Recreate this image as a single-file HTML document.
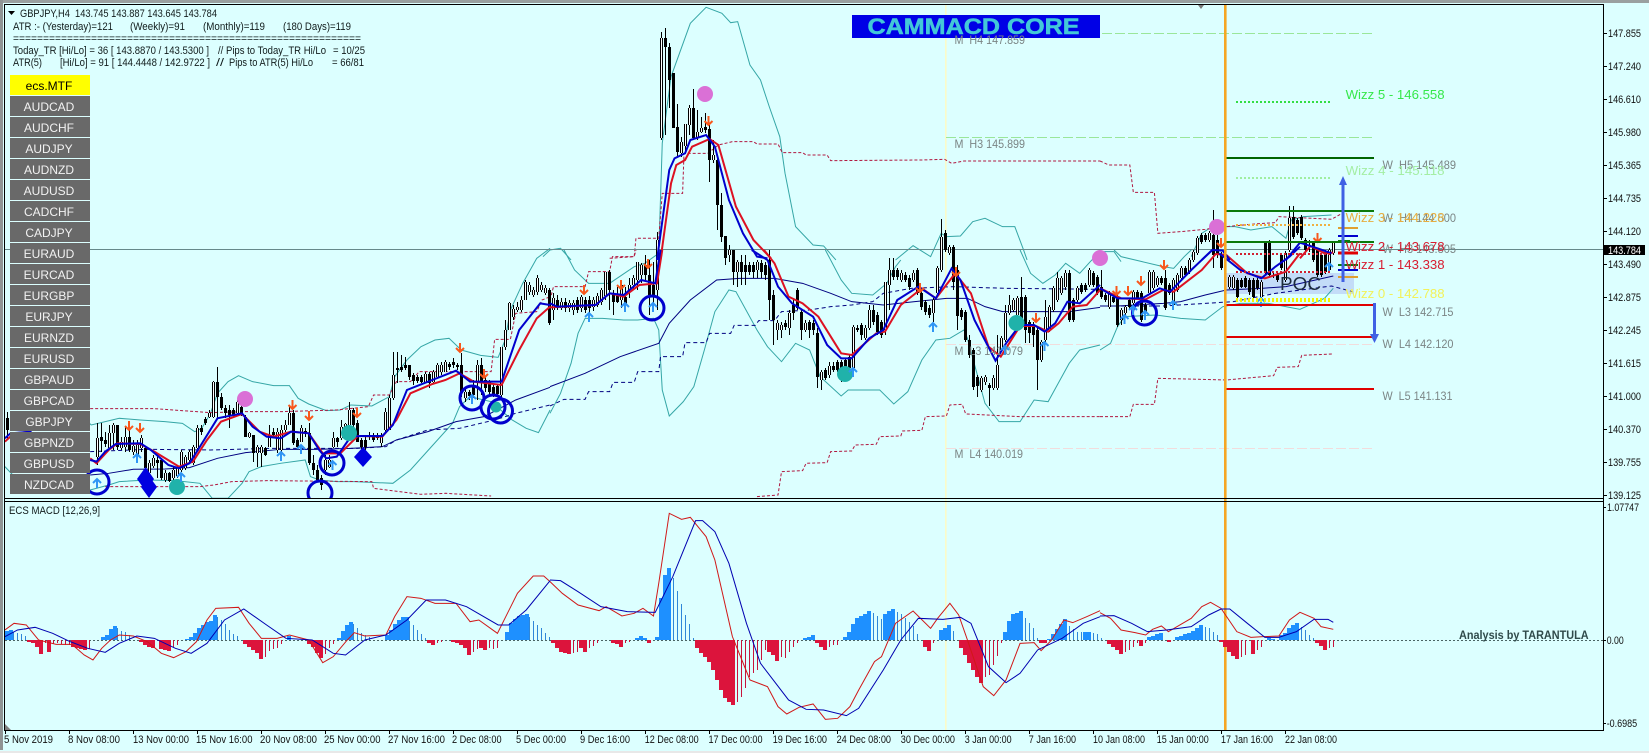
<!DOCTYPE html>
<html><head><meta charset="utf-8"><title>GBPJPY H4</title>
<style>
html,body{margin:0;padding:0;background:#dcffff;width:1649px;height:753px;overflow:hidden}
svg{display:block;position:absolute;left:0;top:0}
text{font-family:"Liberation Sans",sans-serif;white-space:pre}
.t{font-size:11px;fill:#111c1c}
.a{font-size:11px;fill:#111}
.g{font-size:12px;fill:#7b8585}
.w{font-size:13px}
.b{font-size:12px;fill:#f2f2f2;text-anchor:middle}
.v polyline{vector-effect:non-scaling-stroke;fill:none}
.bb polyline{stroke:#35a6a6;stroke-width:1}
.fa polyline{stroke:#0000cd;stroke-width:2}
.sl polyline{stroke:#dd1122;stroke-width:2}
.ma polyline{stroke:#000080;stroke-width:1}
.dn polyline{stroke:#000080;stroke-width:1;stroke-dasharray:4 3}
.dr polyline{stroke:#b01840;stroke-width:1;stroke-dasharray:3 2}
.mr polyline{stroke:#d01818;stroke-width:1}
.mn polyline{stroke:#0000b0;stroke-width:1}
</style></head><body>
<svg width="1649" height="753" viewBox="0 0 1649 753" xmlns="http://www.w3.org/2000/svg">
<defs>
<clipPath id="cm"><rect x="5" y="5" width="1598" height="493"/></clipPath>
<clipPath id="cd"><rect x="5" y="502" width="1598" height="228"/></clipPath>
<path id="u" d="M97 438V457M109 433V448M113 425V433M121 442V448M125 437V447M133 446V452M137 445V455M141 438V448M149 463V473M153 458V466M165 473V480M173 470V478M177 467V476M181 452V470M185 457V468M189 452V460M193 447V463M197 428V448M209 413V417M213 382V417M237 402V413M249 433V437M257 447V453M261 447V453M269 435V447M277 432V450M281 430V450M285 425V430M289 413V425M301 428V442M325 460V470M329 460V467M333 438V447M341 427V438M345 424V430M349 410V425M381 437V443M385 412V430M389 398V430M393 375V398M425 374V382M433 372V382M437 365V377M441 365V372M445 362V372M465 392V398M477 365V383M501 347V395M505 330V347M509 303V330M513 309V317M517 307V310M521 300V310M525 282V300M529 285V292M533 290V295M537 278V292M541 285V290M545 288V293M553 298V310M561 302V308M569 303V308M573 303V310M581 297V308M593 300V307M597 296V305M601 290V302M605 272V296M621 285V300M629 285V290M633 278V285M637 262V280M641 265V275M657 240V290M661 38V138M681 142V153M685 124V146M689 108V125M697 132V138M701 128V132M713 155V160M729 250V255M737 262V272M757 262V270M777 323V330M781 325V330M789 313V328M805 323V330M821 372V380M829 366V375M853 327V368M865 328V338M869 310V328M885 282V330M889 270V285M901 273V280M913 273V280M933 300V313M937 268V293M941 237V270M949 247V253M981 378V390M985 377V382M993 378V388M997 365V388M1001 338V350M1005 313V340M1009 305V313M1013 300V310M1017 298V315M1041 342V360M1045 317V340M1049 307V330M1053 288V310M1057 278V300M1061 278V293M1065 273V287M1077 288V300M1089 270V285M1109 293V307M1121 310V320M1125 307V313M1133 292V303M1149 272V293M1153 272V288M1157 278V285M1173 280V305M1177 275V290M1181 268V278M1189 260V272M1193 252V260M1197 238V253M1209 233V240M1229 277V287M1233 277V288M1261 282V297M1285 253V280M1289 218V250M1329 250V270M1333 243V253"/>
</defs>
<rect width="1649" height="753" fill="#dcffff"/>
<rect x="0" y="0" width="1649" height="3" fill="#9aa0a0"/>
<rect x="0" y="0" width="3" height="750" fill="#8f9494"/>
<rect x="0" y="751" width="1649" height="2" fill="#e8e8e8"/>

<!-- verticals -->
<rect x="945" y="5" width="1.6" height="725" fill="#fbfbc8"/>

<!-- POC -->
<rect x="1225" y="273" width="129" height="21" fill="#c3dcf8"/>

<!-- Monthly levels -->
<g fill="none" stroke-width="1">
<path d="M946 33.5H1372M946 137.5H1372" stroke="#9ae69a" stroke-dasharray="10 3"/>
<path d="M946 344.5H1372M946 448.5H1372" stroke="#f2dcdc" stroke-dasharray="10 3"/>
</g>

<!-- bands & averages -->
<g clip-path="url(#cm)"><g class="v">
<g class="bb">
<polyline transform="translate(0,250) scale(.3508,.3333)" points="14,650 50,690 257,720 310,705 340,695 420,690 500,692 570,700 605,745 650,745 690,700 710,665 745,650 800,640 870,630 885,680 910,690 960,695 1010,695 1120,700 1170,660 1230,590 1290,520 1310,470 1340,440 1400,455 1460,510 1500,535 1535,548 1568,480"/>
<polyline transform="translate(0,250) scale(.3508,.3333)" points="220,483 260,525 300,515 340,505 400,510 470,515 520,520 555,545 575,535 600,490 620,430 650,395 680,377 720,395 780,407 825,407 850,445 880,462 930,482 970,480 1000,465 1060,468 1110,440 1125,380 1160,330 1200,290 1240,270 1280,265 1315,300 1370,316 1420,322 1440,270 1455,180 1490,100 1530,25 1568,-5"/>
<polyline transform="translate(550,0) scale(.3508,.3333)" points="-20,770 0,750 30,745 60,780"/>
<polyline transform="translate(550,250) scale(.3508,.3333)" points="40,0 70,60 110,100 170,100 240,50 270,40 310,10"/>
<polyline transform="translate(550,0) scale(.3508,.3333)" points="310,760 320,430 345,230 400,70 445,22 490,40 515,68 535,65 570,195 600,240 625,320 655,410 670,520 700,680 750,735 780,738 815,780"/>
<polyline transform="translate(550,250) scale(.3508,.3333)" points="785,0 830,90 860,130 920,135 960,100 985,50 1000,30"/>
<polyline transform="translate(550,0) scale(.3508,.3333)" points="985,780 1035,737 1085,770 1115,700 1130,710 1170,708 1205,665 1240,655 1290,680 1325,680 1350,750 1360,780"/>
<polyline transform="translate(550,250) scale(.3508,.3333)" points="1340,0 1370,70 1405,100 1440,75 1470,40 1510,70 1540,35 1568,5"/>
<polyline transform="translate(1100,0) scale(.3508,.3333)" points="-20,765 0,755 40,755 60,785"/>
<polyline transform="translate(1100,250) scale(.3508,.3333)" points="40,0 60,20 120,35 180,50 210,55 240,20 260,0"/>
<polyline transform="translate(1100,0) scale(.3508,.3333)" points="260,770 290,700 320,680 385,680 430,690 490,680 530,715 545,660 580,650 660,645"/>
<polyline transform="translate(550,250) scale(.3508,.3333)" points="0,490 30,430 60,340 80,250 100,205 150,205 210,210 250,210 295,205 310,240 320,420 340,498 380,455 410,410 440,300 470,185 510,120 530,125 590,240 620,290 660,335 700,280 740,300 770,380 830,438 850,420 940,420 980,462 1020,425 1060,330 1100,270 1140,265 1180,240 1190,265 1240,460 1280,515 1340,515 1380,450 1420,455 1480,340 1510,300 1568,285"/>
<polyline transform="translate(1100,250) scale(.3508,.3333)" points="0,300 30,280 50,230 70,200 160,195 230,205 300,210 350,170 400,160 480,160 570,178 640,145 665,115"/>
</g>
<g class="ma">
<polyline transform="translate(0,250) scale(.3508,.3333)" points="257,675 310,670 380,658 470,657 540,653 620,625 700,608 800,598 900,598 1000,595 1090,590 1130,570 1220,545 1300,515 1380,500 1470,450 1568,412"/>
<polyline transform="translate(550,250) scale(.3508,.3333)" points="0,410 100,370 200,320 310,280 340,220 400,150 475,90 540,85 640,85 720,100 800,130 860,155 950,165 1040,155 1130,145 1190,145 1240,170 1290,185 1380,185 1480,185 1568,172"/>
<polyline transform="translate(1100,250) scale(.3508,.3333)" points="0,168 50,168 180,160 230,155 300,135 360,120 460,115 530,110 665,78"/>
</g>
<g class="dn">
<polyline transform="translate(0,250) scale(.3508,.3333)" points="257,605 420,598 600,600 780,595 1020,595 1100,590 1130,570 1220,540 1310,535 1410,510 1470,490 1568,465"/>
<polyline transform="translate(550,250) scale(.3508,.3333)" points="0,468 40,448 100,448 110,425 170,425 180,397 240,397 250,365 310,365 315,320 378,320 385,278 445,278 455,250 515,250 525,226 585,226 595,212 640,212 660,185 740,180 800,170 860,165 920,155 950,130 1030,115 1150,110 1300,115 1568,118"/>
<polyline transform="translate(1100,250) scale(.3508,.3333)" points="0,168 180,168 380,155 500,130 660,108 720,125"/>
</g>
<g class="dr">
<polyline transform="translate(0,250) scale(.3508,.3333)" points="257,476 440,476 600,488 700,485 800,485 960,480 1050,470 1065,435 1110,435 1130,395 1170,395 1195,365 1400,365 1410,268 1455,268 1470,190 1530,185 1545,150 1568,140"/>
<polyline transform="translate(550,250) scale(.3508,.3333)" points="0,150 10,110 100,110 110,65 170,65 178,20 240,20 245,0"/>
<polyline transform="translate(550,0) scale(.3508,.3333)" points="170,775 240,770 245,715 310,715 320,580 378,580 382,460 450,460 480,435 520,425 580,425 590,432 650,432 662,458 720,458 730,465 790,465 800,482 1060,480 1125,478 1145,490 1180,483 1568,483"/>
<polyline transform="translate(1100,0) scale(.3508,.3333)" points="0,483 25,495 85,495 95,577 155,577 165,700 230,695 300,688 360,680 440,672 500,668 510,650 660,658 690,640"/>
<polyline transform="translate(0,250) scale(.3508,.3333)" points="300,710 570,710 610,705 660,695 760,692 1060,695 1065,715 1200,733 1270,730 1400,738"/>
<polyline transform="translate(550,250) scale(.3508,.3333)" points="590,740 650,735 660,665 720,662 730,640 790,638 800,605 860,603 870,585 930,583 940,560 1000,558 1005,543 1060,541 1070,500 1130,498 1140,465 1175,463 1185,492 1340,500 1568,500"/>
<polyline transform="translate(1100,250) scale(.3508,.3333)" points="0,500 85,500 95,463 155,463 165,385 360,390 495,377 505,352 565,350 575,316 665,312"/>
</g>
</g>

<!-- price line -->
<rect x="5" y="249" width="1598" height="1" fill="#66888a"/>

<g transform="translate(.5 0)">
<!-- candles wicks -->
<path fill="none" stroke="#000" stroke-width="1" d="M7 412V440M97 423V465M101 423V452M105 432V447M109 425V450M113 423V450M117 425V450M121 437V450M125 427V452M129 427V452M133 440V455M137 440V458M141 435V452M145 447V470M149 460V477M153 455V468M157 455V478M161 458V480M165 470V482M169 472V482M173 467V480M177 466V478M181 450V472M185 455V470M189 450V462M193 445V465M197 425V450M201 425V435M205 417V425M209 410V418M213 381V418M217 367V418M221 393V410M225 405V418M229 405V428M233 408V418M237 400V416M241 405V416M245 415V437M249 432V438M253 435V462M257 445V467M261 445V467M265 447V456M269 425V447M273 428V437M277 428V453M281 425V460M285 420V432M289 407V425M293 410V445M297 438V450M301 425V442M305 428V437M309 423V465M313 455V475M317 465V482M321 475V490M325 455V475M329 455V468M333 432V448M337 437V447M341 420V440M345 423V432M349 402V428M353 408V428M357 420V442M361 438V450M365 435V450M369 432V440M373 433V442M377 433V440M381 433V447M385 408V432M389 395V430M393 352V400M397 352V383M401 355V372M405 357V370M409 365V380M413 373V385M417 375V383M421 375V383M425 372V383M429 372V388M433 370V383M437 363V378M441 362V375M445 360V372M449 362V370M453 358V368M457 363V370M461 353V397M465 388V402M469 390V400M473 380V398M477 360V400M481 358V395M485 377V392M489 380V395M493 385V397M497 384V397M501 347V400M505 320V350M509 302V330M513 305V320M517 302V312M521 296V312M525 280V300M529 282V295M533 287V297M537 275V295M541 282V292M545 285V295M549 288V325M553 293V320M557 295V310M561 298V310M565 298V312M569 300V312M573 300V315M577 297V313M581 295V312M585 297V313M589 296V314M593 297V311M597 293V307M601 288V305M605 272V300M609 270V310M613 290V315M617 287V303M621 282V308M625 287V305M629 278V298M633 275V290M637 262V290M641 263V283M645 255V280M649 260V315M653 262V310M657 232V310M661 32V140M665 28V135M669 43V108M673 73V128M677 104V157M681 137V157M685 124V153M689 105V135M693 89V140M697 110V140M701 117V133M705 113V133M709 125V182M713 140V163M717 155V230M721 193V242M725 236V265M729 245V262M733 250V285M737 260V287M741 255V285M745 255V285M749 262V275M753 262V278M757 260V278M761 260V278M765 262V280M769 250V320M773 290V345M777 320V340M781 322V338M785 320V330M789 310V335M793 298V320M797 288V310M801 310V340M805 320V332M809 320V338M813 320V335M817 328V388M821 370V390M825 368V380M829 362V378M833 362V372M837 360V372M841 360V382M845 358V372M849 355V370M853 325V370M857 325V332M861 323V340M865 325V340M869 305V330M873 305V325M877 312V335M881 320V338M885 282V335M889 258V310M893 258V280M897 268V280M901 270V282M905 272V282M909 275V290M913 270V282M917 268V295M921 290V310M925 300V315M929 305V318M933 298V322M937 266V295M941 219V272M945 230V252M949 245V255M953 245V290M957 265V330M961 308V320M965 310V342M969 335V358M973 348V390M977 375V397M981 376V392M985 375V385M989 383V406M993 375V390M997 335V390M1001 336V352M1005 305V342M1009 295V315M1013 298V312M1017 296V318M1021 277V328M1025 295V343M1029 320V343M1033 322V347M1037 328V390M1041 340V362M1045 300V342M1049 305V332M1053 286V312M1057 272V302M1061 276V295M1065 270V290M1069 270V322M1073 298V322M1077 286V302M1081 283V294M1085 283V292M1089 268V287M1093 271V287M1097 275V295M1101 270V299M1105 293V302M1109 291V309M1113 295V303M1117 295V327M1121 308V325M1125 305V315M1129 298V309M1133 290V305M1137 290V300M1141 291V322M1145 303V315M1149 270V295M1153 270V290M1157 276V287M1161 276V285M1165 270V310M1169 283V295M1173 278V307M1177 273V292M1181 266V280M1185 266V276M1189 258V274M1193 250V262M1197 236V255M1201 233V244M1205 233V242M1209 231V242M1213 210V268M1217 235V258M1221 252V270M1229 275V289M1233 275V290M1237 278V299M1241 278V288M1245 276V288M1249 278V295M1253 278V299M1257 278V290M1261 280V299M1265 243V275M1269 240V277M1273 272V278M1277 273V282M1281 253V270M1285 251V282M1289 206V252M1293 206V239M1297 218V235M1301 215V240M1305 238V252M1309 240V252M1313 241V262M1317 248V277M1321 253V277M1325 250V274M1329 248V272M1333 243V255"/>
<!-- black bodies -->
<path fill="none" stroke="#000" stroke-width="3" d="M7 418V430M101 437V441M105 440V444M117 425V447M129 437V450M145 448V468M157 460V463M161 460V478M169 473V481M201 428V432M205 419V423M217 382V397M221 397V408M225 408V413M229 410V415M233 410V416M241 407V415M245 417V437M253 435V453M265 448V455M273 432V435M293 413V443M297 440V447M305 431V433M309 433V463M313 463V470M317 470V480M321 478V485M337 438V442M353 410V425M357 423V442M361 440V447M365 440V447M369 435V437M373 436V440M377 435V438M397 368V370M401 367V370M405 365V368M409 365V377M413 375V381M417 377V381M421 377V382M429 374V383M449 364V367M453 362V365M457 365V367M461 365V393M469 392V396M473 385V395M481 365V383M485 380V388M489 382V392M493 387V394M497 386V394M549 290V323M557 300V307M565 302V308M577 300V310M585 300V310M589 300V308M609 272V290M613 295V302M617 295V302M625 297V305M645 265V275M649 275V295M653 285V295M665 38V47M669 47V80M673 73V128M677 127V152M693 108V138M705 127V130M709 129V160M717 160V205M721 205V237M725 236V258M733 250V272M741 262V272M745 265V272M749 265V272M753 265V272M761 263V272M765 265V275M769 260V300M773 295V320M785 323V327M793 305V313M797 290V308M801 312V330M809 322V330M813 323V330M817 333V377M825 370V378M833 366V370M837 362V370M841 362V380M845 360V370M849 357V368M857 328V330M861 325V335M873 310V322M877 315V332M881 322V335M893 270V277M897 270V277M905 275V280M909 278V287M917 270V293M921 293V307M925 302V312M929 308V315M945 233V250M953 247V282M957 270V316M961 310V317M965 312V340M969 340V355M973 350V387M977 377V386M989 385V388M1021 297V325M1025 297V330M1029 322V333M1033 325V335M1037 330V360M1069 273V320M1073 300V320M1081 285V292M1085 285V290M1093 273V285M1097 277V293M1101 287V297M1105 295V300M1113 297V302M1117 297V325M1129 300V307M1137 292V298M1141 293V320M1145 305V313M1161 278V283M1165 278V308M1169 285V293M1185 268V275M1201 235V242M1205 235V240M1213 235V255M1217 240V255M1221 255V268M1237 280V297M1241 280V287M1245 278V287M1249 280V292M1253 280V297M1257 280V288M1265 243V273M1269 243V275M1277 275V280M1281 255V268M1293 217V237M1297 220V233M1301 217V238M1305 240V250M1313 243V260M1317 250V275M1321 255V275M1325 252V272"/>
<!-- white bodies -->
<use href="#u" fill="none" stroke="#000" stroke-width="3"/>
<use href="#u" fill="none" stroke="#fff" stroke-width="1"/>
</g>

<g class="v">
<g class="sl">
<polyline transform="translate(0,250) scale(.3508,.3333)" points="14,575 40,550 90,545"/>
<polyline transform="translate(0,250) scale(.3508,.3333)" points="257,625 275,640 310,600 335,580 400,582 440,605 510,650 550,635 590,570 630,515 690,492 740,545 780,560 830,545 880,550 920,610 970,610 1020,558 1090,560 1130,510 1170,430 1230,403 1270,390 1310,370 1350,395 1430,405 1480,300 1530,205 1568,170"/>
<polyline transform="translate(550,0) scale(.3508,.3333)" points="315,780 345,550 360,495 385,480 405,440 455,417 480,435 530,620 580,720 630,775"/>
<polyline transform="translate(550,250) scale(.3508,.3333)" points="0,172 130,165 170,130 210,140 255,105 305,100 320,0"/>
<polyline transform="translate(550,250) scale(.3508,.3333)" points="610,0 640,40 680,140 720,160 765,200 830,310 860,315 930,250 955,245 1000,165 1060,115 1100,145 1155,70 1200,130 1250,290 1285,320 1340,228 1385,228 1420,245 1450,220 1490,170 1530,165 1568,120"/>
<polyline transform="translate(1100,250) scale(.3508,.3333)" points="0,115 60,145 130,148 180,120 210,125 290,60 330,12 360,15 420,70 470,85 530,65 570,10"/>
<polyline transform="translate(1100,0) scale(.3508,.3333)" points="570,775 600,738 640,760 665,758"/>
</g>
<g class="fa">
<polyline transform="translate(0,250) scale(.3508,.3333)" points="14,565 30,550 90,545"/>
<polyline transform="translate(0,250) scale(.3508,.3333)" points="257,630 275,635 300,605 330,582 400,580 430,600 480,645 510,655 540,640 570,590 620,505 690,490 720,530 760,560 800,565 830,545 880,550 910,600 930,625 960,620 1000,560 1030,558 1090,558 1120,525 1160,420 1220,395 1300,362 1340,395 1430,395 1480,240 1540,160 1568,165"/>
<polyline transform="translate(550,0) scale(.3508,.3333)" points="305,780 340,510 355,475 385,460 400,420 445,405 470,440 510,600 550,700 590,770 620,775"/>
<polyline transform="translate(550,250) scale(.3508,.3333)" points="0,160 20,170 130,165 170,130 210,135 260,90 300,100 315,0"/>
<polyline transform="translate(550,250) scale(.3508,.3333)" points="575,0 620,30 650,110 690,160 750,200 790,285 830,325 860,325 910,265 950,240 990,150 1050,110 1100,145 1145,55 1170,90 1210,210 1270,332 1300,280 1340,225 1380,225 1410,245 1440,220 1475,155 1510,160 1568,105"/>
<polyline transform="translate(1100,250) scale(.3508,.3333)" points="0,115 50,145 120,145 170,115 200,125 260,60 320,0"/>
<polyline transform="translate(1100,0) scale(.3508,.3333)" points="290,780 320,750 350,752 370,780"/>
<polyline transform="translate(1100,250) scale(.3508,.3333)" points="340,10 400,60 460,85 500,50 540,20 570,-10"/>
<polyline transform="translate(1100,0) scale(.3508,.3333)" points="530,780 570,728 620,745 660,760"/>
</g>
</g>

<!-- markers -->
<g fill="#da70d6"><circle cx="245" cy="399" r="8"/><circle cx="705" cy="94" r="8"/><circle cx="1217" cy="227" r="8"/><circle cx="1100" cy="258" r="8"/></g>
<g fill="#20b2aa"><circle cx="177" cy="487" r="8"/><circle cx="349" cy="433" r="8"/><circle cx="496" cy="407" r="5.5"/><circle cx="845" cy="374" r="8"/><circle cx="1016.5" cy="323" r="8"/></g>
<g fill="#0000e0"><path d="M145.6 467L154 479 145.6 491 137 479zM149 476L157 487 149 498 141 487zM363 447L372 457 363 467 354 457z"/></g>
<g fill="none" stroke="#0000cd" stroke-width="3"><circle cx="97" cy="482" r="12"/><circle cx="332" cy="463" r="12"/><circle cx="320" cy="493" r="12"/><circle cx="472" cy="398" r="12"/><circle cx="493" cy="407" r="12"/><circle cx="500.5" cy="411" r="12"/><circle cx="652" cy="308" r="12"/><circle cx="1144.5" cy="313" r="12"/></g>
<path fill="none" stroke="#2f96f5" stroke-width="2" d="M97 488v-9m-4 4l4-4 4 4M137 463v-9m-4 4l4-4 4 4M181 482v-9m-4 4l4-4 4 4M281 461v-9m-4 4l4-4 4 4M301 454v-9m-4 4l4-4 4 4M332.5 470v-9m-4 4l4-4 4 4M472 404v-9m-4 4l4-4 4 4M589 322v-9m-4 4l4-4 4 4M625 312v-9m-4 4l4-4 4 4M653 312v-9m-4 4l4-4 4 4M853 377v-9m-4 4l4-4 4 4M933 332v-9m-4 4l4-4 4 4M1005 355v-9m-4 4l4-4 4 4M1044.5 351v-9m-4 4l4-4 4 4M1124.5 324v-9m-4 4l4-4 4 4M1133 315v-9m-4 4l4-4 4 4M1145 320v-9m-4 4l4-4 4 4M1173 310v-9m-4 4l4-4 4 4M1261 307v-9m-4 4l4-4 4 4M1329 272v-9m-4 4l4-4 4 4"/>
<path fill="none" stroke="#f8581c" stroke-width="2" d="M129 421v9m-4-4l4 4 4-4M140 423v9m-4-4l4 4 4-4M292.5 400v9m-4-4l4 4 4-4M309 411v9m-4-4l4 4 4-4M357 408v9m-4-4l4 4 4-4M460 343v9m-4-4l4 4 4-4M484 369v9m-4-4l4 4 4-4M584 285v9m-4-4l4 4 4-4M621 280v9m-4-4l4 4 4-4M648 259v9m-4-4l4 4 4-4M708.5 116v9m-4-4l4 4 4-4M920 283v9m-4-4l4 4 4-4M956 267v9m-4-4l4 4 4-4M1036 313v9m-4-4l4 4 4-4M1116.5 286v9m-4-4l4 4 4-4M1128 286v9m-4-4l4 4 4-4M1141 276v9m-4-4l4 4 4-4M1164 260v9m-4-4l4 4 4-4M1221 238v9m-4-4l4 4 4-4M1317.5 233v9m-4-4l4 4 4-4"/>
</g>

<!-- Weekly levels -->
<g fill="none" stroke-width="2">
<path d="M1225 158H1374" stroke="#006400"/>
<path d="M1225 211H1374M1225 242H1374" stroke="#0a7a0a"/>
<path d="M1225 305H1374M1225 337H1374M1225 389H1374" stroke="#e00000"/>
</g>
<!-- Wizz dotted -->
<g fill="none" stroke-width="2" stroke-dasharray="2 2">
<path d="M1236 102H1330" stroke="#33dd44"/>
<path d="M1236 178H1330" stroke="#a0eea0"/>
<path d="M1236 225H1330" stroke="#f0b040"/>
<path d="M1236 254H1330M1236 272H1330" stroke="#d02030"/>
<path d="M1236 300H1330" stroke="#f4f400" stroke-width="4"/>
</g>
<!-- bars right of price -->
<g fill="none" stroke-width="2">
<path d="M1338 228H1358" stroke="#e0a030"/>
<path d="M1338 236H1358" stroke="#0000cd"/>
<path d="M1338 241H1350" stroke="#0a7a0a"/>
<path d="M1338 253H1358" stroke="#e00000" stroke-width="3"/>
<path d="M1338 265H1358" stroke="#0a7a0a"/>
<path d="M1338 270H1358" stroke="#0000cd"/>
<path d="M1338 277H1358" stroke="#e0a030"/>
</g>
<!-- orange vertical -->
<rect x="1224" y="5" width="2.6" height="725" fill="#f5a623"/>

<!-- big arrows -->
<path d="M1341.5 184H1344.5V282H1341.5z M1339 185L1343 176 1347 185z" fill="#4060e4"/>
<path d="M1373 303H1376V335H1373z M1370 334H1379L1374.5 343z" fill="#4060e4"/>

<!-- frame -->
<g fill="#000">
<rect x="4" y="4" width="1600" height="1"/>
<rect x="4" y="4" width="1" height="727"/>
<rect x="5" y="498" width="1598" height="1"/>
<rect x="5" y="501" width="1598" height="1"/>
<rect x="4" y="730" width="1600" height="1"/>
<rect x="1603" y="4" width="1" height="727"/>
</g>
<path d="M1198 5h6l-3 4z" fill="#7a7a7a"/>
<path d="M5 724l6 6H5z" fill="#808080"/>

<!-- MACD -->
<g clip-path="url(#cd)">
<path d="M5 640.5H1603" stroke="#4a6464" stroke-width="1" stroke-dasharray="2 2" fill="none"/>
<g transform="translate(.5 0)">
<path fill="none" stroke="#2f86d8" stroke-width="1" d="M13 640V632M17 640V633M21 640V634M25 640V636M117 640V628M121 640V631M125 640V632M129 640V635M217 640V617M221 640V620M225 640V624M229 640V630M233 640V634M237 640V636M353 640V624M357 640V628M361 640V633M365 640V635M369 640V637M409 640V621M413 640V625M417 640V630M421 640V634M425 640V638M529 640V617M533 640V621M537 640V625M541 640V628M545 640V633M549 640V637M673 640V578M677 640V591M681 640V604M685 640V615M689 640V624M693 640V638M873 640V613M877 640V616M881 640V619M897 640V612M901 640V614M905 640V618M909 640V622M913 640V626M917 640V634M953 640V631M1025 640V618M1029 640V623M1033 640V628M1037 640V638M1069 640V626M1073 640V629M1077 640V632M1081 640V632M1093 640V633M1097 640V634M1101 640V638M1205 640V627M1209 640V628M1213 640V632M1217 640V635M1301 640V627M1305 640V630M1309 640V635M1313 640V638"/>
<path fill="none" stroke="#c8143c" stroke-width="1" d="M45 640V643M53 640V644M57 640V643M61 640V644M65 640V645M69 640V645M89 640V649M173 640V647M177 640V645M265 640V657M269 640V651M273 640V649M277 640V648M281 640V644M325 640V654M329 640V648M333 640V644M437 640V643M441 640V642M473 640V652M477 640V649M489 640V648M493 640V649M497 640V648M573 640V653M577 640V652M589 640V648M593 640V646M597 640V643M625 640V643M629 640V642M737 640V702M741 640V697M745 640V688M749 640V677M753 640V673M757 640V670M761 640V660M765 640V650M781 640V657M785 640V658M789 640V652M793 640V647M797 640V643M829 640V647M833 640V645M837 640V645M933 640V643M985 640V677M989 640V675M993 640V665M997 640V656M1001 640V643M1125 640V652M1129 640V650M1133 640V647M1137 640V643M1145 640V643M1241 640V657M1245 640V655M1249 640V641M1257 640V650M1261 640V647M1329 640V648M1333 640V647"/>
</g>
<path fill="none" stroke="#1e90ff" stroke-width="4" d="M7 640V631M11 640V630M103 640V637M107 640V635M111 640V629M115 640V626M187 640V639M191 640V637M195 640V633M199 640V628M203 640V625M207 640V622M211 640V621M215 640V615M289 640V636M339 640V638M343 640V631M347 640V625M351 640V622M387 640V635M391 640V630M395 640V624M399 640V620M403 640V617M407 640V617M507 640V632M511 640V623M515 640V619M519 640V616M523 640V615M527 640V614M637 640V638M641 640V636M645 640V638M657 640V637M661 640V598M665 640V575M669 640V568M805 640V638M809 640V637M813 640V635M845 640V637M849 640V632M853 640V624M857 640V618M861 640V616M865 640V614M869 640V611M885 640V614M889 640V611M893 640V609M941 640V630M945 640V628M949 640V625M1005 640V632M1009 640V621M1013 640V614M1017 640V613M1021 640V611M1049 640V639M1053 640V634M1057 640V629M1061 640V624M1065 640V619M1085 640V632M1089 640V632M1149 640V637M1153 640V636M1157 640V634M1161 640V633M1177 640V637M1181 640V636M1185 640V634M1189 640V633M1193 640V631M1197 640V628M1201 640V625M1269 640V638M1273 640V639M1281 640V635M1285 640V633M1289 640V628M1293 640V625M1297 640V623"/>
<path fill="none" stroke="#dc143c" stroke-width="4" d="M29 640V642M33 640V643M37 640V647M41 640V654M49 640V652M73 640V647M77 640V648M81 640V649M85 640V650M141 640V642M145 640V645M149 640V647M153 640V648M161 640V649M165 640V650M169 640V651M245 640V644M249 640V647M253 640V650M257 640V653M261 640V659M309 640V644M313 640V647M317 640V653M321 640V658M429 640V643M433 640V645M453 640V642M457 640V643M461 640V645M465 640V648M469 640V655M481 640V648M485 640V650M553 640V643M557 640V648M561 640V652M565 640V653M569 640V654M581 640V648M585 640V652M613 640V643M617 640V644M621 640V647M649 640V643M697 640V648M701 640V653M705 640V657M709 640V662M713 640V670M717 640V680M721 640V690M725 640V698M729 640V702M733 640V705M769 640V652M773 640V655M777 640V661M817 640V643M821 640V647M825 640V650M925 640V647M929 640V651M961 640V648M965 640V655M969 640V663M973 640V670M977 640V677M981 640V683M1041 640V643M1045 640V643M1109 640V644M1113 640V647M1117 640V650M1121 640V654M1141 640V646M1169 640V642M1221 640V642M1225 640V647M1229 640V652M1233 640V656M1237 640V659M1253 640V654M1317 640V643M1321 640V646M1325 640V650"/>
<g class="v">
<g class="mr">
<polyline transform="translate(0,500) scale(.3508,.3333)" points="14,390 40,370 75,375 110,420 160,433 205,433 240,465 265,480 290,445 315,420 340,405 380,408 420,425 460,460 495,473 530,455 560,425 590,360 615,325 680,322 710,370 745,415 790,415 825,405 880,420 920,488 950,470 990,420 1010,398 1040,408 1100,405 1125,350 1160,290 1200,295 1240,310 1300,310 1340,365 1365,360 1418,400 1475,280 1520,228 1550,228 1568,245"/>
<polyline transform="translate(550,500) scale(.3508,.3333)" points="0,245 35,280 80,315 140,332 160,320 205,348 240,340 265,325 295,348 310,250 340,40 375,58 400,52 445,110 470,180 520,410 570,540 620,560 650,620 675,642 710,622 750,612 785,658 820,655 855,620 880,570 925,485 945,470 985,370 1035,333 1085,385 1105,355 1140,310 1165,345 1190,420 1235,560 1265,587 1300,540 1340,430 1380,428 1400,452 1430,420 1465,360 1490,368 1530,350 1568,332"/>
<polyline transform="translate(1100,500) scale(.3508,.3333)" points="0,338 30,355 60,390 100,398 130,405 150,388 175,378 195,395 260,355 290,320 315,307 345,325 390,395 430,412 465,410 510,408 540,360 570,337 610,355 630,380 665,388"/>
</g>
<g class="mn">
<polyline transform="translate(0,500) scale(.3508,.3333)" points="14,410 50,390 100,382 150,400 200,425 250,445 300,457 340,430 390,408 440,415 500,445 545,460 590,430 640,360 695,327 760,375 815,415 890,420 950,460 985,465 1040,420 1100,405 1160,360 1215,300 1270,300 1330,320 1420,375 1450,375 1500,330 1568,242"/>
<polyline transform="translate(550,500) scale(.3508,.3333)" points="0,240 30,242 80,275 145,320 220,335 300,337 350,230 415,62 435,62 470,95 510,190 560,370 600,490 680,600 730,628 780,630 845,647 880,625 950,510 1000,420 1050,355 1120,358 1170,352 1200,370 1250,500 1300,548 1340,520 1390,450 1460,415 1520,370 1568,350"/>
<polyline transform="translate(1100,500) scale(.3508,.3333)" points="0,348 40,347 90,370 135,395 190,390 260,380 310,345 345,327 370,327 420,370 470,412 510,412 560,395 610,358 650,358 665,367"/>
</g>
</g>
</g>

<!-- Buttons -->
<rect x="10" y="75" width="80" height="20" fill="#ffff00"/>
<g fill="#696969">
<rect x="10" y="96" width="80" height="20"/><rect x="10" y="117" width="80" height="20"/><rect x="10" y="138" width="80" height="20"/><rect x="10" y="159" width="80" height="20"/><rect x="10" y="180" width="80" height="20"/><rect x="10" y="201" width="80" height="20"/><rect x="10" y="222" width="80" height="20"/><rect x="10" y="243" width="80" height="20"/><rect x="10" y="264" width="80" height="20"/><rect x="10" y="285" width="80" height="20"/><rect x="10" y="306" width="80" height="20"/><rect x="10" y="327" width="80" height="20"/><rect x="10" y="348" width="80" height="20"/><rect x="10" y="369" width="80" height="20"/><rect x="10" y="390" width="80" height="20"/><rect x="10" y="411" width="80" height="20"/><rect x="10" y="432" width="80" height="20"/><rect x="10" y="453" width="80" height="20"/><rect x="10" y="474" width="80" height="20"/>
</g>
<text class="b" x="49" y="90" style="fill:#000">ecs.MTF</text>
<text class="b" x="49" y="111">AUDCAD</text><text class="b" x="49" y="132">AUDCHF</text><text class="b" x="49" y="153">AUDJPY</text><text class="b" x="49" y="174">AUDNZD</text><text class="b" x="49" y="195">AUDUSD</text><text class="b" x="49" y="216">CADCHF</text><text class="b" x="49" y="237">CADJPY</text><text class="b" x="49" y="258">EURAUD</text><text class="b" x="49" y="279">EURCAD</text><text class="b" x="49" y="300">EURGBP</text><text class="b" x="49" y="321">EURJPY</text><text class="b" x="49" y="342">EURNZD</text><text class="b" x="49" y="363">EURUSD</text><text class="b" x="49" y="384">GBPAUD</text><text class="b" x="49" y="405">GBPCAD</text><text class="b" x="49" y="426">GBPJPY</text><text class="b" x="49" y="447">GBPNZD</text><text class="b" x="49" y="468">GBPUSD</text><text class="b" x="49" y="489">NZDCAD</text>

<!-- header -->
<path d="M8 11h7l-3.5 4z" fill="#000"/>
<text class="t" x="20" y="17" textLength="197" lengthAdjust="spacingAndGlyphs">GBPJPY,H4  143.745 143.887 143.645 143.784</text>
<text class="t" x="13" y="30" textLength="100" lengthAdjust="spacingAndGlyphs">ATR :- (Yesterday)=121</text>
<text class="t" x="130" y="30" textLength="55" lengthAdjust="spacingAndGlyphs">(Weekly)=91</text>
<text class="t" x="203" y="30" textLength="62" lengthAdjust="spacingAndGlyphs">(Monthly)=119</text>
<text class="t" x="283" y="30" textLength="68" lengthAdjust="spacingAndGlyphs">(180 Days)=119</text>
<text class="t" x="13" y="42" textLength="348" lengthAdjust="spacingAndGlyphs">==========================================================</text>
<text class="t" x="13" y="54" textLength="196" lengthAdjust="spacingAndGlyphs">Today_TR [Hi/Lo] = 36 [ 143.8870 / 143.5300 ]</text>
<text class="t" x="218" y="54" textLength="108" lengthAdjust="spacingAndGlyphs">// Pips to Today_TR Hi/Lo</text>
<text class="t" x="333" y="54" textLength="32" lengthAdjust="spacingAndGlyphs">= 10/25</text>
<text class="t" x="13" y="66" textLength="29" lengthAdjust="spacingAndGlyphs">ATR(5)</text>
<text class="t" x="60" y="66" textLength="150" lengthAdjust="spacingAndGlyphs">[Hi/Lo] = 91 [ 144.4448 / 142.9722 ]</text>
<text class="t" x="216" y="66" textLength="8" lengthAdjust="spacingAndGlyphs">//</text>
<text class="t" x="229" y="66" textLength="84" lengthAdjust="spacingAndGlyphs">Pips to ATR(5) Hi/Lo</text>
<text class="t" x="332" y="66" textLength="32" lengthAdjust="spacingAndGlyphs">= 66/81</text>

<!-- CAMMACD -->
<rect x="852" y="15" width="248" height="23" fill="#0000e6"/>
<text x="867.5" y="34" font-size="22" font-weight="700" fill="#43c8d8" stroke="#43c8d8" stroke-width=".5" textLength="212" lengthAdjust="spacingAndGlyphs">CAMMACD CORE</text>

<!-- level labels -->
<text class="g" x="954.5" y="44" textLength="70.5" lengthAdjust="spacingAndGlyphs">M  H4 147.859</text>
<text class="g" x="954.5" y="148" textLength="70.5" lengthAdjust="spacingAndGlyphs">M  H3 145.899</text>
<text class="g" x="954.5" y="355" textLength="68.5" lengthAdjust="spacingAndGlyphs">M  L3 141.079</text>
<text class="g" x="954.5" y="458" textLength="68.5" lengthAdjust="spacingAndGlyphs">M  L4 140.019</text>
<text class="g" x="1382.5" y="169" textLength="73.5" lengthAdjust="spacingAndGlyphs">W  H5 145.489</text>
<text class="g" x="1382.5" y="222" textLength="73.5" lengthAdjust="spacingAndGlyphs">W  H4 144.500</text>
<text class="g" x="1382.5" y="253" textLength="73.5" lengthAdjust="spacingAndGlyphs">W  H3 143.805</text>
<text class="g" x="1382.5" y="316" textLength="71" lengthAdjust="spacingAndGlyphs">W  L3 142.715</text>
<text class="g" x="1382.5" y="348" textLength="71" lengthAdjust="spacingAndGlyphs">W  L4 142.120</text>
<text class="g" x="1382.5" y="400" textLength="70" lengthAdjust="spacingAndGlyphs">W  L5 141.131</text>
<text class="w" x="1345.6" y="99" fill="#35e84a" textLength="99" lengthAdjust="spacingAndGlyphs">Wizz 5 - 146.558</text>
<text class="w" x="1345.6" y="175" fill="#a4eea4" textLength="99" lengthAdjust="spacingAndGlyphs">Wizz 4 - 145.118</text>
<text class="w" x="1345.6" y="222" fill="#e8ae40" textLength="99" lengthAdjust="spacingAndGlyphs">Wizz 3 - 144.228</text>
<text class="w" x="1345.6" y="251" fill="#d81c30" textLength="99" lengthAdjust="spacingAndGlyphs">Wizz 2 - 143.678</text>
<text class="w" x="1345.6" y="269" fill="#d81c30" textLength="99" lengthAdjust="spacingAndGlyphs">Wizz 1 - 143.338</text>
<text class="w" x="1345.6" y="298" fill="#f2f25a" textLength="99" lengthAdjust="spacingAndGlyphs">Wizz 0 - 142.788</text>
<text x="1280" y="290" font-size="18" fill="#1c2c3c" textLength="41" lengthAdjust="spacingAndGlyphs">POC</text>

<!-- MACD labels -->
<text class="t" x="9" y="514" textLength="91" lengthAdjust="spacingAndGlyphs">ECS MACD [12,26,9]</text>
<text x="1459" y="639" font-size="11.5" font-weight="700" fill="#2f4a4a" textLength="129.6" lengthAdjust="spacingAndGlyphs">Analysis by TARANTULA</text>

<!-- right axis -->
<path fill="none" stroke="#000" d="M1603 33.5h4M1603 66.5h4M1603 99.5h4M1603 132.5h4M1603 165.5h4M1603 198.5h4M1603 231.5h4M1603 264.5h4M1603 297.5h4M1603 330.5h4M1603 363.5h4M1603 396.5h4M1603 429.5h4M1603 462.5h4M1603 495.5h4M1603 507.5h3M1603 640.5h3M1603 723.5h3"/>
<g class="a">
<text x="1608" y="37" textLength="33" lengthAdjust="spacingAndGlyphs">147.855</text>
<text x="1608" y="70" textLength="33" lengthAdjust="spacingAndGlyphs">147.240</text>
<text x="1608" y="103" textLength="33" lengthAdjust="spacingAndGlyphs">146.610</text>
<text x="1608" y="136" textLength="33" lengthAdjust="spacingAndGlyphs">145.980</text>
<text x="1608" y="169" textLength="33" lengthAdjust="spacingAndGlyphs">145.365</text>
<text x="1608" y="202" textLength="33" lengthAdjust="spacingAndGlyphs">144.735</text>
<text x="1608" y="235" textLength="33" lengthAdjust="spacingAndGlyphs">144.120</text>
<text x="1608" y="268" textLength="33" lengthAdjust="spacingAndGlyphs">143.490</text>
<text x="1608" y="301" textLength="33" lengthAdjust="spacingAndGlyphs">142.875</text>
<text x="1608" y="334" textLength="33" lengthAdjust="spacingAndGlyphs">142.245</text>
<text x="1608" y="367" textLength="33" lengthAdjust="spacingAndGlyphs">141.615</text>
<text x="1608" y="400" textLength="33" lengthAdjust="spacingAndGlyphs">141.000</text>
<text x="1608" y="433" textLength="33" lengthAdjust="spacingAndGlyphs">140.370</text>
<text x="1608" y="466" textLength="33" lengthAdjust="spacingAndGlyphs">139.755</text>
<text x="1608" y="499" textLength="33" lengthAdjust="spacingAndGlyphs">139.125</text>
<text x="1607" y="511" textLength="32" lengthAdjust="spacingAndGlyphs">1.07747</text>
<text x="1606.7" y="644" textLength="17" lengthAdjust="spacingAndGlyphs">0.00</text>
<text x="1606.7" y="727" textLength="30.5" lengthAdjust="spacingAndGlyphs">-0.6985</text>
</g>
<rect x="1604" y="245" width="41" height="10" fill="#000"/>
<text x="1608" y="254" font-size="11" fill="#fff" textLength="33" lengthAdjust="spacingAndGlyphs">143.784</text>

<!-- time axis -->
<path fill="none" stroke="#000" d="M5.5 730v4M69.5 730v4M133.5 730v4M197.5 730v4M261.5 730v4M325.5 730v4M389.5 730v4M453.5 730v4M517.5 730v4M581.5 730v4M645.5 730v4M709.5 730v4M773.5 730v4M837.5 730v4M901.5 730v4M965.5 730v4M1029.5 730v4M1093.5 730v4M1157.5 730v4M1221.5 730v4M1285.5 730v4"/>
<g class="a">
<text x="4" y="743" textLength="49" lengthAdjust="spacingAndGlyphs">5 Nov 2019</text>
<text x="68" y="743" textLength="52" lengthAdjust="spacingAndGlyphs">8 Nov 08:00</text>
<text x="133" y="743" textLength="56" lengthAdjust="spacingAndGlyphs">13 Nov 00:00</text>
<text x="196" y="743" textLength="56.5" lengthAdjust="spacingAndGlyphs">15 Nov 16:00</text>
<text x="260" y="743" textLength="57" lengthAdjust="spacingAndGlyphs">20 Nov 08:00</text>
<text x="324" y="743" textLength="56.5" lengthAdjust="spacingAndGlyphs">25 Nov 00:00</text>
<text x="388" y="743" textLength="57" lengthAdjust="spacingAndGlyphs">27 Nov 16:00</text>
<text x="452" y="743" textLength="49.6" lengthAdjust="spacingAndGlyphs">2 Dec 08:00</text>
<text x="516" y="743" textLength="50" lengthAdjust="spacingAndGlyphs">5 Dec 00:00</text>
<text x="580" y="743" textLength="50" lengthAdjust="spacingAndGlyphs">9 Dec 16:00</text>
<text x="644.7" y="743" textLength="54" lengthAdjust="spacingAndGlyphs">12 Dec 08:00</text>
<text x="708.5" y="743" textLength="54" lengthAdjust="spacingAndGlyphs">17 Dec 00:00</text>
<text x="772.7" y="743" textLength="54.3" lengthAdjust="spacingAndGlyphs">19 Dec 16:00</text>
<text x="836.6" y="743" textLength="54.4" lengthAdjust="spacingAndGlyphs">24 Dec 08:00</text>
<text x="900.8" y="743" textLength="54.2" lengthAdjust="spacingAndGlyphs">30 Dec 00:00</text>
<text x="964.7" y="743" textLength="47" lengthAdjust="spacingAndGlyphs">3 Jan 00:00</text>
<text x="1028.8" y="743" textLength="47.2" lengthAdjust="spacingAndGlyphs">7 Jan 16:00</text>
<text x="1093" y="743" textLength="52" lengthAdjust="spacingAndGlyphs">10 Jan 08:00</text>
<text x="1156.8" y="743" textLength="52" lengthAdjust="spacingAndGlyphs">15 Jan 00:00</text>
<text x="1221" y="743" textLength="52" lengthAdjust="spacingAndGlyphs">17 Jan 16:00</text>
<text x="1285" y="743" textLength="52" lengthAdjust="spacingAndGlyphs">22 Jan 08:00</text>
</g>
</svg>
</body></html>
